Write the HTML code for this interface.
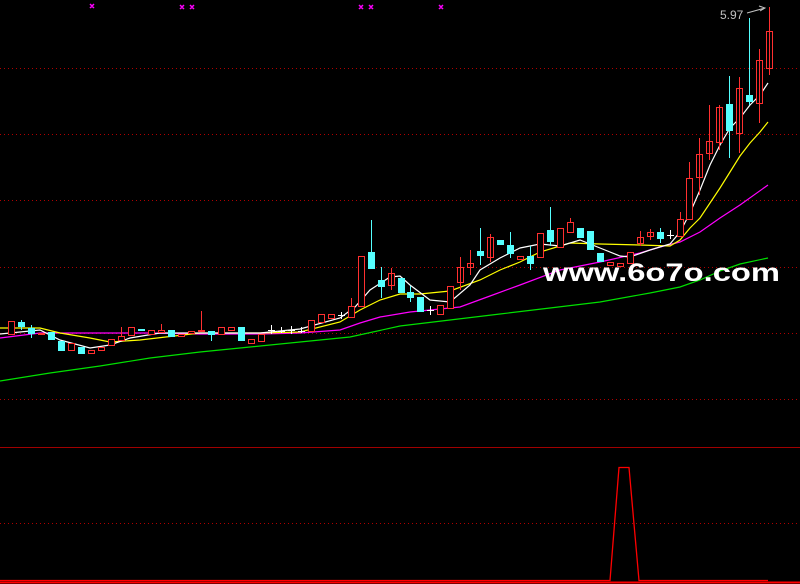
<!DOCTYPE html>
<html><head><meta charset="utf-8"><style>html,body{margin:0;padding:0;background:#000;width:800px;height:584px;overflow:hidden}</style></head>
<body>
<svg width="800" height="584" xmlns="http://www.w3.org/2000/svg" style="display:block">
<rect width="800" height="584" fill="#000"/>
<g stroke="#b00000" stroke-width="1" stroke-dasharray="1,3">
<line x1="0" y1="68.5" x2="800" y2="68.5"/>
<line x1="0" y1="134.5" x2="800" y2="134.5"/>
<line x1="0" y1="200.5" x2="800" y2="200.5"/>
<line x1="0" y1="267.5" x2="800" y2="267.5"/>
<line x1="0" y1="333.5" x2="800" y2="333.5"/>
<line x1="0" y1="399.5" x2="800" y2="399.5"/>
<line x1="0" y1="523.5" x2="800" y2="523.5"/>
</g>
<line x1="0" y1="447.5" x2="800" y2="447.5" stroke="#a00000"/>
<g fill="none" stroke-width="1.2">
<polyline stroke="#00e000" points="0,381 50,373 100,366 150,358 200,352 250,347 300,342 350,337 400,326 450,320 500,314 550,308 600,302 650,293 680,287 700,280 720,271 740,264 768,258"/>
<polyline stroke="#ff00ff" points="0,338 40,333 80,333 150,333 200,334 260,334 300,333 340,330 360,323 380,317 410,312 430,310 460,307 490,296 520,285 560,270 600,262 640,253 660,247 680,242 700,232 720,218 740,205 768,185"/>
<polyline stroke="#ffff00" points="0,328 40,328 60,333 90,338 110,342 140,340 200,333 260,333 300,332 340,322 360,310 380,300 400,294 420,294 450,291 480,280 500,270 520,262 540,252 570,243 600,244 640,245 670,246 680,240 690,228 700,218 710,203 720,188 730,172 740,156 750,143 760,132 768,122"/>
<polyline stroke="#ffffff" points="0,334 40,330 60,340 90,348 110,345 130,338 160,333 200,333 260,333 300,329 340,318 355,307 370,290 390,277 400,276 410,285 430,300 450,302 470,285 480,270 500,258 520,248 540,244 560,246 580,240 600,248 620,256 630,257 650,250 670,244 680,232 690,213 700,190 710,165 720,145 730,128 740,118 750,105 760,95 768,83"/>
</g>
<g stroke-width="1">
<!-- red hollow candles: x,top,bottom -->
<g stroke="#ff3030" fill="#000">
<rect x="8.5" y="321.5" width="6" height="13"/>
<rect x="38.5" y="333.5" width="6" height="1"/>
<rect x="68.5" y="343.5" width="6" height="7"/>
<rect x="88.5" y="350.5" width="6" height="3"/>
<rect x="98.5" y="347.5" width="6" height="3"/>
<rect x="108.5" y="339.5" width="6" height="6"/>
<rect x="118.5" y="336.5" width="6" height="4"/><line x1="121.5" y1="327" x2="121.5" y2="336"/>
<rect x="128.5" y="327.5" width="6" height="8"/>
<rect x="148.5" y="330.5" width="6" height="4"/>
<rect x="158.5" y="330.5" width="6" height="2"/><line x1="161.5" y1="324" x2="161.5" y2="330"/>
<rect x="178.5" y="334.5" width="6" height="2"/>
<rect x="188.5" y="331.5" width="6" height="2"/>
<rect x="198.5" y="330.5" width="6" height="1"/><line x1="201.5" y1="311" x2="201.5" y2="330"/>
<rect x="218.5" y="327.5" width="6" height="7"/>
<rect x="228.5" y="327.5" width="6" height="3"/>
<rect x="248.5" y="339.5" width="6" height="4"/>
<rect x="258.5" y="334.5" width="6" height="7"/>
<rect x="308.5" y="320.5" width="6" height="11"/>
<rect x="318.5" y="314.5" width="6" height="8"/>
<rect x="328.5" y="314.5" width="6" height="4"/>
<rect x="348.5" y="306.5" width="6" height="11"/><line x1="351.5" y1="298" x2="351.5" y2="306"/>
<rect x="358.5" y="256.5" width="6" height="50"/>
<rect x="388.5" y="273.5" width="6" height="12"/><line x1="391.5" y1="268" x2="391.5" y2="290"/>
<rect x="437.5" y="305.5" width="6" height="9"/>
<rect x="447.5" y="286.5" width="6" height="22"/>
<rect x="457.5" y="267.5" width="6" height="15"/><line x1="460.5" y1="257" x2="460.5" y2="290"/>
<rect x="467.5" y="263.5" width="6" height="4"/><line x1="470.5" y1="250" x2="470.5" y2="275"/>
<rect x="487.5" y="237.5" width="6" height="20"/><line x1="490.5" y1="234" x2="490.5" y2="262"/>
<rect x="517.5" y="256.5" width="6" height="3"/>
<rect x="537.5" y="233.5" width="6" height="24"/>
<rect x="557.5" y="228.5" width="6" height="19"/>
<rect x="567.5" y="222.5" width="6" height="10"/><line x1="570.5" y1="218" x2="570.5" y2="222"/>
<rect x="607.5" y="262.5" width="6" height="3"/>
<rect x="617.5" y="263.5" width="6" height="3"/>
<rect x="627.5" y="252.5" width="6" height="11"/>
<rect x="637.5" y="237.5" width="6" height="6"/><line x1="640.5" y1="231" x2="640.5" y2="246"/>
<rect x="647.5" y="232.5" width="6" height="4"/><line x1="650.5" y1="229" x2="650.5" y2="240"/>
<rect x="677.5" y="219.5" width="6" height="17"/><line x1="680.5" y1="212" x2="680.5" y2="219"/>
<rect x="686.5" y="178.5" width="6" height="41"/><line x1="689.5" y1="162" x2="689.5" y2="178"/>
<rect x="696.5" y="154.5" width="6" height="23"/><line x1="699.5" y1="138" x2="699.5" y2="195"/>
<rect x="706.5" y="141.5" width="6" height="12"/><line x1="709.5" y1="105" x2="709.5" y2="160"/>
<rect x="716.5" y="107.5" width="6" height="35"/><line x1="719.5" y1="105" x2="719.5" y2="150"/>
<rect x="736.5" y="88.5" width="6" height="45"/><line x1="739.5" y1="77" x2="739.5" y2="153"/>
<rect x="756.5" y="60.5" width="6" height="43"/><line x1="759.5" y1="49" x2="759.5" y2="123"/>
<rect x="766.5" y="31.5" width="6" height="37"/><line x1="769.5" y1="7" x2="769.5" y2="75"/>
</g>
<g fill="#55ffff" stroke="#55ffff">
<rect x="18.5" y="322.5" width="6" height="4"/><line x1="21.5" y1="320" x2="21.5" y2="330"/>
<rect x="28.5" y="328.5" width="6" height="5"/><line x1="31.5" y1="325" x2="31.5" y2="338"/>
<rect x="48.5" y="332.5" width="6" height="7"/>
<rect x="58.5" y="341.5" width="6" height="9"/>
<rect x="78.5" y="347.5" width="6" height="6"/>
<rect x="138.5" y="329.5" width="6" height="1"/>
<rect x="168.5" y="330.5" width="6" height="6"/>
<rect x="208.5" y="331.5" width="6" height="3"/><line x1="211.5" y1="331" x2="211.5" y2="341"/>
<rect x="238.5" y="327.5" width="6" height="13"/>
<rect x="368.5" y="252.5" width="6" height="16"/><line x1="371.5" y1="220" x2="371.5" y2="268"/>
<rect x="378.5" y="280.5" width="6" height="6"/><line x1="381.5" y1="267" x2="381.5" y2="298"/>
<rect x="398.5" y="278.5" width="6" height="14"/>
<rect x="407.5" y="292.5" width="6" height="5"/><line x1="410.5" y1="286" x2="410.5" y2="302"/>
<rect x="417.5" y="297.5" width="6" height="14"/>
<rect x="477.5" y="251.5" width="6" height="4"/><line x1="480.5" y1="228" x2="480.5" y2="265"/>
<rect x="497.5" y="240.5" width="6" height="4"/>
<rect x="507.5" y="245.5" width="6" height="8"/><line x1="510.5" y1="232" x2="510.5" y2="258"/>
<rect x="527.5" y="256.5" width="6" height="7"/><line x1="530.5" y1="246" x2="530.5" y2="270"/>
<rect x="547.5" y="230.5" width="6" height="11"/><line x1="550.5" y1="207" x2="550.5" y2="246"/>
<rect x="577.5" y="228.5" width="6" height="9"/>
<rect x="587.5" y="231.5" width="6" height="18"/>
<rect x="597.5" y="253.5" width="6" height="8"/>
<rect x="657.5" y="232.5" width="6" height="6"/><line x1="660.5" y1="228" x2="660.5" y2="243"/>
<rect x="726.5" y="104.5" width="6" height="26"/><line x1="729.5" y1="76" x2="729.5" y2="158"/>
<rect x="746.5" y="95.5" width="6" height="6"/><line x1="749.5" y1="18" x2="749.5" y2="105"/>
</g>
<g stroke="#fff">
<path d="M268 330.5h7M271.5 325v9M278 331.5h7M281.5 327v6M288 330.5h7M291.5 326v8M298 331.5h7M301.5 327v6M338 315.5h7M341.5 312v7M427 310.5h7M430.5 306v9M667 235.5h7M670.5 230v9"/>
</g>
</g>
<g stroke="#ff00ff" stroke-width="1.5">
<path d="M90 4l4 4M94 4l-4 4M180 5l4 4M184 5l-4 4M190 5l4 4M194 5l-4 4M359 5l4 4M363 5l-4 4M369 5l4 4M373 5l-4 4M439 5l4 4M443 5l-4 4"/>
</g>
<text x="720" y="19" fill="#c0c0c0" font-family="Liberation Sans, sans-serif" font-size="12">5.97</text>
<path d="M747 13 L765 8 M759 6 L765 8 L760 11" stroke="#c0c0c0" fill="none"/>
<text x="543" y="281" fill="#ffffff" font-family="Liberation Sans, sans-serif" font-weight="bold" font-size="25" textLength="237" lengthAdjust="spacingAndGlyphs">www.6o7o.com</text>
<path d="M0 580.5 H610 L619 467.5 H629 L639 580.5 H768" stroke="#ff0000" stroke-width="1.3" fill="none"/>
<line x1="0" y1="582.5" x2="800" y2="582.5" stroke="#ff0000" stroke-width="2"/>
</svg>
</body></html>
